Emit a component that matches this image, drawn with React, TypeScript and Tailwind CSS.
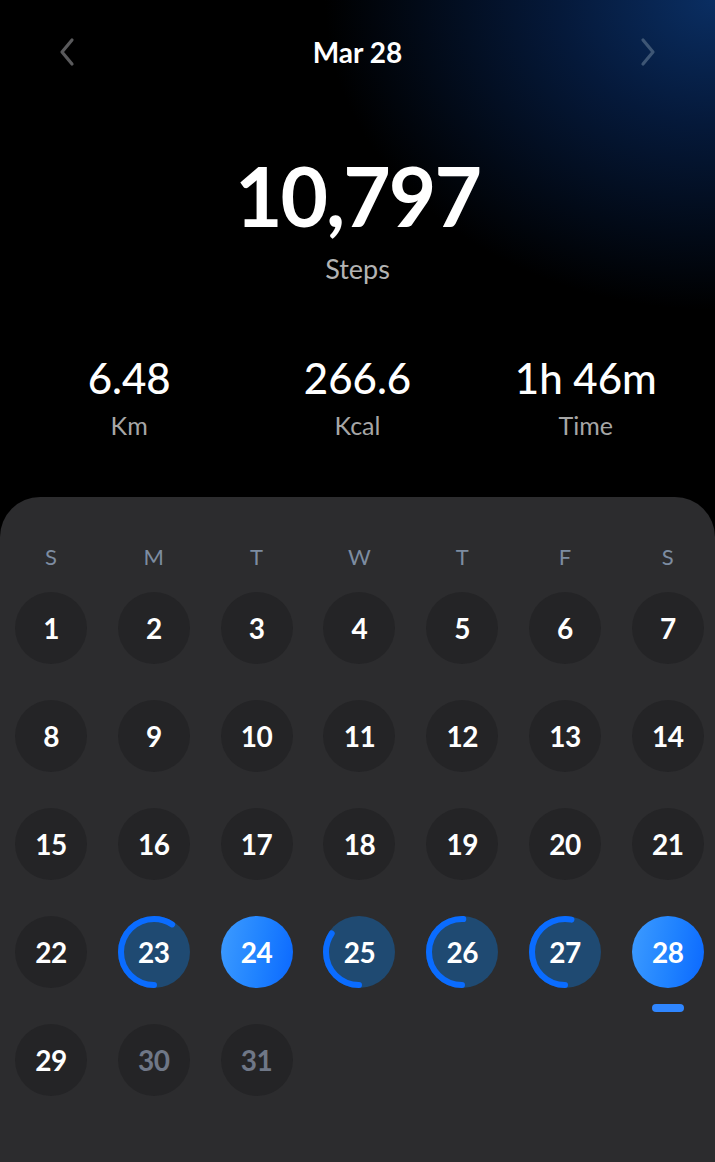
import React from "react";

const F = "font-['Lato','Noto_Sans',sans-serif]";

type Day = { n: number; kind: "plain" | "dim" | "ring" | "full"; pct?: number; today?: boolean };

const days: Day[] = [];
for (let i = 1; i <= 31; i++) {
  let d: Day = { n: i, kind: "plain" };
  if (i === 30 || i === 31) d.kind = "dim";
  if (i === 24) d.kind = "full";
  if (i === 28) d = { n: i, kind: "full", today: true };
  if (i === 23) d = { n: i, kind: "ring", pct: 213 / 360 };
  if (i === 25) d = { n: i, kind: "ring", pct: 124 / 360 };
  if (i === 26) d = { n: i, kind: "ring", pct: 182 / 360 };
  if (i === 27) d = { n: i, kind: "ring", pct: 191 / 360 };
  days.push(d);
}

function Ring({ pct }: { pct: number }) {
  const r = 33;
  const c = 2 * Math.PI * r;
  return (
    <svg width="72" height="72" viewBox="0 0 72 72" className="absolute inset-0">
      <circle
        cx="36"
        cy="36"
        r={r}
        fill="none"
        stroke="#0a6cff"
        strokeWidth="6"
        strokeLinecap="round"
        strokeDasharray={`${c * pct} ${c}`}
        transform="rotate(90 36 36)"
      />
    </svg>
  );
}

function DayCell({ d }: { d: Day }) {
  let cls = "bg-[#242426] text-white";
  if (d.kind === "dim") cls = "bg-[#242426] text-[#6f7787]";
  if (d.kind === "ring") cls = "bg-[#1f4a72] text-white";
  if (d.kind === "full") cls = "bg-[linear-gradient(100deg,#3d9bff_0%,#1f82ff_55%,#0b68ff_100%)] text-white";
  return (
    <div className="relative w-[72px] h-[72px]">
      <div className={`relative w-[72px] h-[72px] rounded-full flex items-center justify-center ${cls}`}>
        {d.kind === "ring" && d.pct !== undefined && <Ring pct={d.pct} />}
        <span className="relative text-[28px] font-bold leading-none tracking-[-0.5px]">{d.n}</span>
      </div>
      {d.today && (
        <div className="absolute left-[20px] top-[88px] w-[32px] h-[8px] rounded-full bg-[#2f86ff]" />
      )}
    </div>
  );
}

export default function App() {
  const weekdays = ["S", "M", "T", "W", "T", "F", "S"];
  return (
    <div
      className={`${F} w-[715px] h-[1162px] overflow-hidden flex flex-col bg-black bg-[radial-gradient(ellipse_390px_310px_at_100%_0%,#0a2e62_0%,#05193a_40%,#000000_100%)]`}
    >
      {/* Header */}
      <div className="mt-[28px] h-[48px] flex items-center justify-between px-[57px]">
        <svg width="20" height="30" viewBox="0 0 20 30" fill="none">
          <path d="M15 3 L5 15 L15 27" stroke="#5a5a5c" strokeWidth="3.2" strokeLinecap="round" strokeLinejoin="round" />
        </svg>
        <div className="text-white text-[28px] font-bold leading-none">Mar 28</div>
        <svg width="20" height="30" viewBox="0 0 20 30" fill="none">
          <path d="M5 3 L15 15 L5 27" stroke="#3e5675" strokeWidth="3.2" strokeLinecap="round" strokeLinejoin="round" />
        </svg>
      </div>

      {/* Steps */}
      <div className="mt-[78px] flex flex-col items-center">
        <div className="text-white text-[82px] font-bold leading-none tracking-[-2px]">10,797</div>
        <div className="mt-[19px] text-[#b3b3b3] text-[27px] leading-none">Steps</div>
      </div>

      {/* Stats */}
      <div className="mt-[75px] px-[15px] grid grid-cols-3">
        {[
          ["6.48", "Km"],
          ["266.6", "Kcal"],
          ["1h 46m", "Time"],
        ].map(([v, l]) => (
          <div key={l} className="flex flex-col items-center">
            <div className="text-white text-[42px] font-medium leading-none">{v}</div>
            <div className="mt-[14px] text-[#a6a6a6] text-[25px] leading-none">{l}</div>
          </div>
        ))}
      </div>

      {/* Calendar panel */}
      <div className="mt-[59px] flex-1 rounded-t-[40px] bg-[#2c2c2e] pt-[48px]">
        <div className="grid grid-cols-[repeat(7,72px)] gap-x-[30.8px] pl-[15px]">
          {weekdays.map((w, i) => (
            <div key={i} className="text-center text-[#7d8ca1] text-[22px] leading-[24px]">
              {w}
            </div>
          ))}
        </div>
        <div className="mt-[23px] grid grid-cols-[repeat(7,72px)] gap-x-[30.8px] gap-y-[36px] pl-[15px]">
          {days.map((d) => (
            <DayCell key={d.n} d={d} />
          ))}
        </div>
      </div>
    </div>
  );
}
